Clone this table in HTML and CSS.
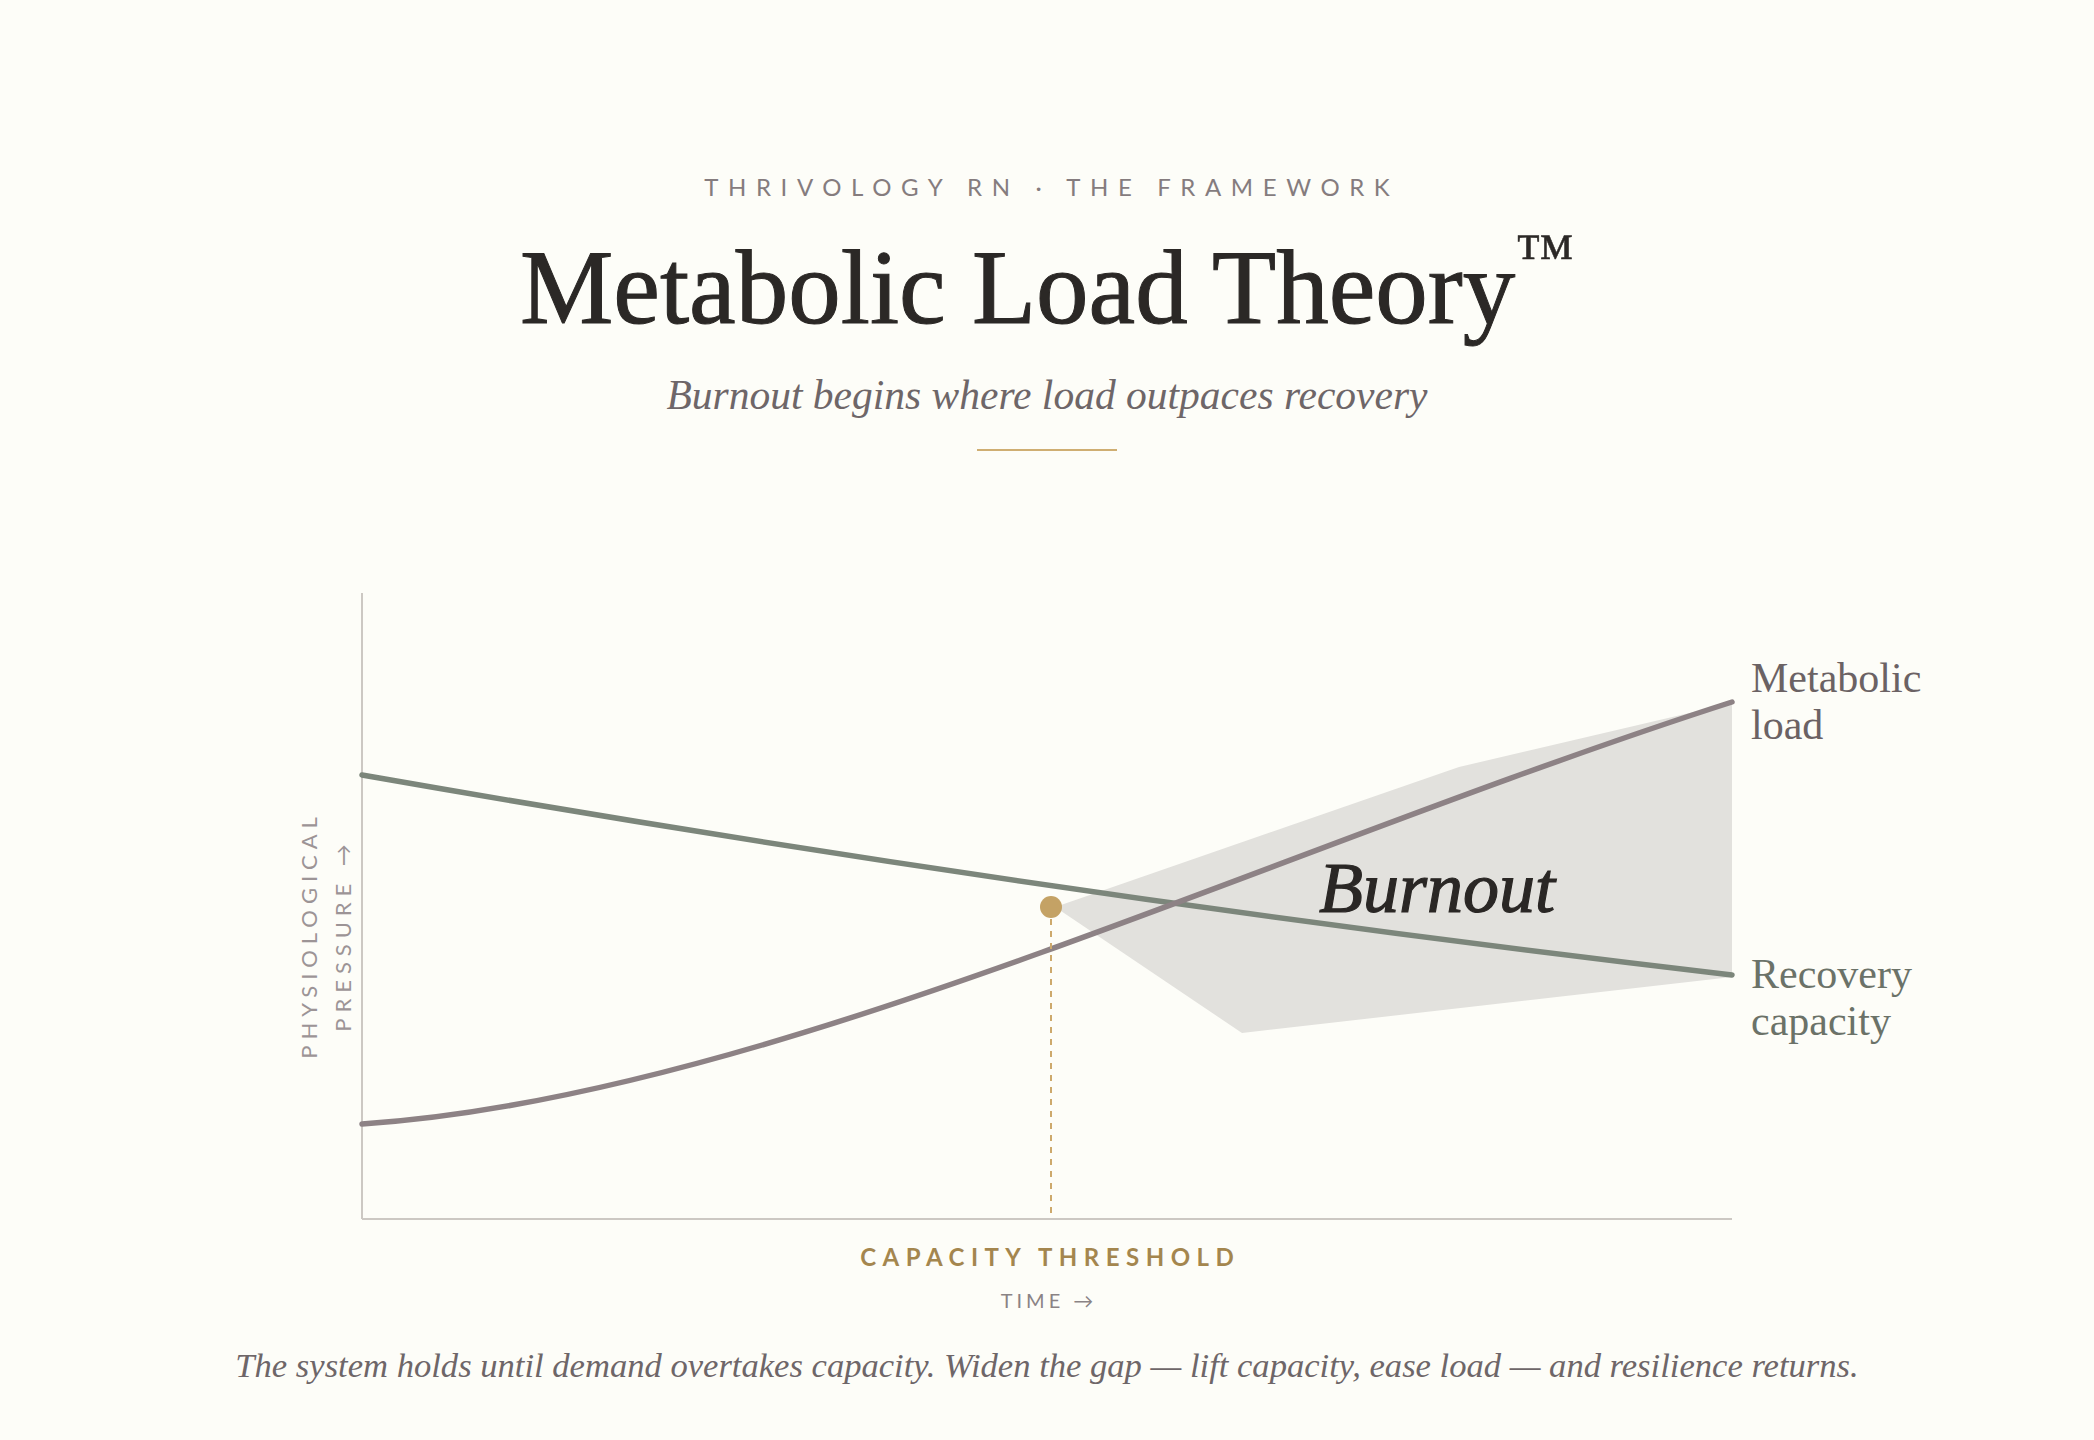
FILE: index.html
```html
<!DOCTYPE html>
<html lang="en">
<head>
<meta charset="utf-8">
<title>Metabolic Load Theory</title>
<link rel="stylesheet" href="styles.css">
</head>
<body>
<main class="page">
  <header class="header">
    <p class="eyebrow">THRIVOLOGY RN · THE FRAMEWORK</p>
    <h1 class="title">Metabolic Load Theory<span class="tm">™</span></h1>
    <p class="subtitle">Burnout begins where load outpaces recovery</p>
    <div class="divider"></div>
  </header>

  <section class="chart">
    <svg class="plot" width="1370" height="626" viewBox="0 0 1370 626">
      <polygon class="shade" points="699,312 1097,174 1370,110 1370,384 880,440 699,318"/>
      <line class="axis" x1="0" y1="0" x2="0" y2="626"/>
      <line class="axis" x1="0" y1="626" x2="1370" y2="626"/>
      <path class="recovery" d="M0,182 Q685,302 1370,382"/>
      <path class="load" d="M0,531 C400,505 900,260 1370,109"/>
      <line class="threshold" x1="689" y1="326" x2="689" y2="624"/>
      <circle class="dot" cx="689" cy="314" r="11"/>
      <text class="burnout" x="957" y="319">Burnout</text>
    </svg>
    <div class="ylabel">PHYSIOLOGICAL<br>PRESSURE →</div>
    <div class="end-label load-label">Metabolic<br>load</div>
    <div class="end-label recovery-label">Recovery<br>capacity</div>
  </section>

  <p class="threshold-label">CAPACITY THRESHOLD</p>
  <p class="xlabel">TIME →</p>
  <p class="caption">The system holds until demand overtakes capacity. Widen the gap — lift capacity, ease load — and resilience returns.</p>
</main>
</body>
</html>
```

FILE: styles.css
```css
html, body {
  margin: 0;
  padding: 0;
  background: #fdfdf8;
}

.page {
  display: flex;
  flex-direction: column;
  align-items: center;
  padding-top: 172px;
  min-height: 1440px;
  box-sizing: border-box;
}

.header {
  display: flex;
  flex-direction: column;
  align-items: center;
}

.eyebrow {
  margin: 0;
  font-family: "Lato", "Open Sans", sans-serif;
  font-size: 24px;
  line-height: 30px;
  letter-spacing: 0.4em;
  color: #857c7e;
  padding-left: 0.4em;
}

.title {
  margin: -7px 0 0;
  font-family: "Liberation Serif", serif;
  font-weight: normal;
  font-size: 105px;
  line-height: 120px;
  color: #2b2826;
  letter-spacing: 0;
  -webkit-text-stroke: 1px #2b2826;
}

.tm {
  font-size: 60px;
  vertical-align: 48px;
  margin-left: 0;
  -webkit-text-stroke: 0.5px #2b2826;
}

.subtitle {
  margin: 23px 0 0;
  font-family: "Liberation Serif", serif;
  font-style: italic;
  font-size: 41.5px;
  line-height: 48px;
  color: #6e6668;
}

.divider {
  width: 140px;
  height: 2px;
  background: #cfae72;
  margin-top: 30px;
}

.chart {
  position: relative;
  width: 1370px;
  height: 626px;
  margin-top: 142px;
}

.plot {
  display: block;
  overflow: visible;
}

.shade {
  fill: #e2e1dd;
}

.axis {
  stroke: #ccc8c3;
  stroke-width: 2;
}

.recovery {
  fill: none;
  stroke: #7c867b;
  stroke-width: 5.5;
  stroke-linecap: round;
}

.load {
  fill: none;
  stroke: #8d8285;
  stroke-width: 5.5;
  stroke-linecap: round;
}

.threshold {
  stroke: #cda96c;
  stroke-width: 2;
  stroke-dasharray: 6 6;
}

.dot {
  fill: #c4a265;
}

.burnout {
  font-family: "Liberation Serif", serif;
  font-style: italic;
  font-size: 72px;
  fill: #2a2725;
  stroke: #2a2725;
  stroke-width: 1.2;
}

.ylabel {
  position: absolute;
  left: -36px;
  top: 342px;
  transform: translate(-50%, -50%) rotate(-90deg);
  font-family: "Lato", "Open Sans", sans-serif;
  font-size: 22px;
  line-height: 34px;
  letter-spacing: 0.27em;
  color: #9c9496;
  text-align: center;
  white-space: nowrap;
}

.end-label {
  position: absolute;
  left: 1389px;
  font-family: "Liberation Serif", serif;
  font-size: 42px;
  line-height: 47px;
  white-space: nowrap;
}

.load-label {
  top: 62px;
  color: #6b6264;
}

.recovery-label {
  top: 358px;
  color: #6b7268;
}

.threshold-label {
  margin: 23px 0 0;
  font-family: "Lato", "Open Sans", sans-serif;
  font-weight: bold;
  font-size: 24px;
  line-height: 30px;
  letter-spacing: 0.27em;
  color: #a4864e;
  padding-left: 0.27em;
}

.xlabel {
  margin: 14px 0 0;
  font-family: "Lato", "Open Sans", sans-serif;
  font-size: 20px;
  line-height: 28px;
  letter-spacing: 0.2em;
  color: #8a8385;
  padding-left: 0.2em;
}

.caption {
  margin: 30px 0 0;
  font-family: "Liberation Serif", serif;
  font-style: italic;
  font-size: 34.6px;
  line-height: 42px;
  color: #6e6668;
}
```
